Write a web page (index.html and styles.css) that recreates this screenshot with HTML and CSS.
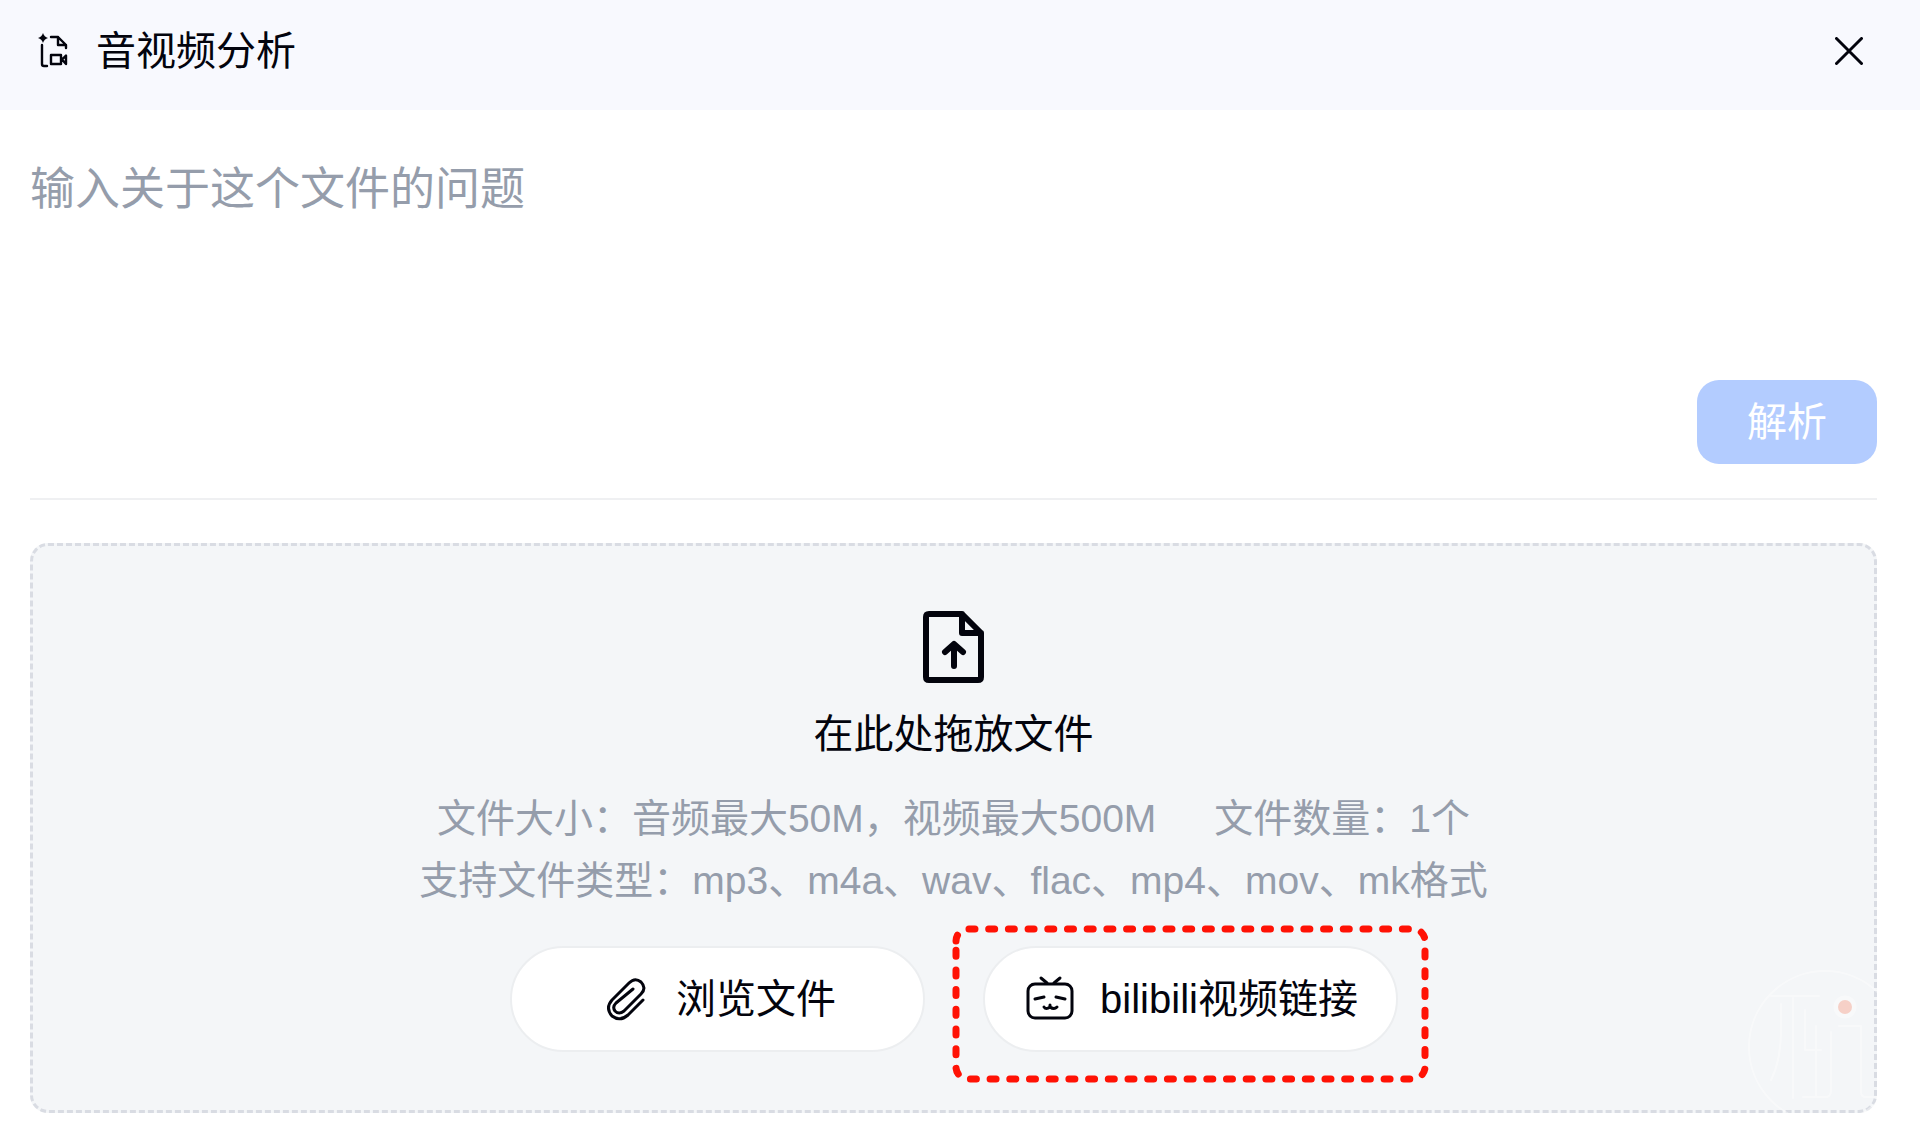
FILE: index.html
```html
<!DOCTYPE html>
<html lang="zh-CN">
<head>
<meta charset="utf-8">
<meta name="viewport" content="width=device-width, initial-scale=1">
<title>音视频分析</title>
<link rel="stylesheet" href="styles.css">
</head>
<body>
<header class="header">
  <svg class="header-icon" viewBox="0 0 30 36" aria-hidden="true">
    <path class="fill" d="M5 0 Q6.200 3.800 10 5 Q6.200 6.200 5 10 Q3.800 6.200 0 5 Q3.800 3.800 5 0Z"/>
    <path stroke-width="2.400" d="M4 12V31Q4 33 6 33H9M13 4H20L28 12V15M20 4V12H28M13 22H23V31H13ZM24 26.500L28 22.500V31Z"/>
  </svg>
  <h1 class="title">音视频分析</h1>
  <button class="close" type="button" aria-label="关闭">
    <svg viewBox="0 0 28 28" aria-hidden="true"><path d="M1.500 1.500L26.500 26.500M26.500 1.500L1.500 26.500"/></svg>
  </button>
</header>
<main class="content">
  <form class="ask">
    <textarea class="question" aria-label="问题" placeholder="输入关于这个文件的问题"></textarea>
    <button class="submit" type="button">解析</button>
  </form>
  <section class="dropzone">
    <svg class="upload-icon" viewBox="0 0 62 72" aria-hidden="true">
      <path d="M3 6Q3 3 6 3H39L58 22V66Q58 69 55 69H6Q3 69 3 66ZM39 3V22H58"/>
      <path d="M31 55V34M22 41L31 33L40 41"/>
    </svg>
    <h2 class="drop-title">在此处拖放文件</h2>
    <p class="hint"><span>文件大小：音频最大50M，视频最大500M</span><span>文件数量：1个</span></p>
    <p class="hint">支持文件类型：mp3、m4a、wav、flac、mp4、mov、mk格式</p>
    <div class="actions">
      <button class="pill" type="button">
        <svg class="pill-icon" viewBox="0 0 48 48" aria-hidden="true">
          <path d="M41 25L26 40Q18 47 10 41Q3 33 10 25L27 8Q33 2 39 7Q45 13 39 19L22 36Q17 40 13 36Q10 32 14 28L31 14"/>
        </svg>
        浏览文件
      </button>
      <div class="highlight">
        <button class="pill" type="button">
          <svg class="pill-icon" viewBox="0 0 48 48" aria-hidden="true">
            <rect x="2" y="9" width="44" height="34" rx="7"/>
            <path d="M15 3L21 8M34 3L28 8M9 24L18 22M30 22L39 24M18 32Q20 35 24 32Q28 35 31 32M24 30V32"/>
          </svg>
          bilibili视频链接
        </button>
        <svg class="highlight-frame" viewBox="0 0 475 157" aria-hidden="true">
          <path d="M3 16A12 12 0 0 1 15 4H460A12 12 0 0 1 472 16V142A12 12 0 0 1 460 154H15A12 12 0 0 1 3 142Z"/>
        </svg>
      </div>
    </div>
  </section>
</main>
<svg class="watermark" viewBox="0 0 160 160" aria-hidden="true">
  <circle cx="78" cy="77" r="76"/>
  <path d="M24 26H72M34 34V60Q34 90 24 110M46 28V128M58 40V80H74M69 56V126M56 127H80Q84 126 84 120V62M92 56H114V122Q114 127 119 127H130Q134 126 134 120V104"/>
  <circle class="ring" cx="98" cy="37" r="9"/>
  <circle class="dot" cx="98" cy="37" r="7"/>
</svg>
</body>
</html>
```
FILE: styles.css
```css
* {
  box-sizing: border-box;
}

body {
  position: relative;
  margin: 0;
  background: #fff;
  color: #03040d;
  font-family: "Liberation Sans", "Noto Sans CJK SC", sans-serif;
  font-size: 40px;
  line-height: 60px;
}

button,
textarea {
  border: 0;
  padding: 0;
  color: inherit;
  font: inherit;
}

svg {
  fill: none;
  stroke: currentColor;
  stroke-linecap: round;
  stroke-linejoin: round;
}

.header {
  display: flex;
  align-items: center;
  height: 110px;
  padding: 0 57px 8px 38px;
  background: #f8f9fe;
}

.header-icon {
  width: 30px;
  height: 36px;
}

.header-icon .fill {
  fill: currentColor;
  stroke: none;
}

.title {
  flex: 1;
  margin: 0 0 0 28px;
  font-size: 40px;
  font-weight: 400;
}

.close {
  display: flex;
  background: none;
}

.close svg {
  width: 28px;
  height: 28px;
  stroke-width: 3;
}

.content {
  padding: 48px 43px 30px 30px;
}

.ask {
  display: flex;
  flex-direction: column;
  align-items: flex-end;
  padding-bottom: 34px;
  border-bottom: 2px solid #eff0f2;
}

.question {
  width: 100%;
  height: 222px;
  background: none;
  font-size: 45px;
  line-height: 64px;
  outline: 0;
  resize: none;
}

.question::placeholder {
  color: #959dab;
  opacity: 1;
}

.submit {
  width: 180px;
  height: 84px;
  border-radius: 22px;
  background: #b3ccff;
  color: #fff;
}

.dropzone {
  display: flex;
  flex-direction: column;
  align-items: center;
  margin-top: 43px;
  padding: 65px 40px 58px;
  border: 3px dashed #d9dce3;
  border-radius: 18px;
  background: #f4f6f8;
}

.upload-icon {
  width: 62px;
  height: 72px;
  stroke-width: 6;
}

.drop-title {
  margin: 21px 0 24px;
  font-size: 40px;
  font-weight: 400;
}

.hint {
  display: flex;
  gap: 58px;
  margin: 0;
  color: #959dab;
  font-size: 39px;
  line-height: 62px;
}

.actions {
  display: flex;
  gap: 58px;
  margin-top: 34px;
}

.pill {
  display: flex;
  align-items: center;
  justify-content: center;
  gap: 26px;
  width: 415px;
  height: 106px;
  padding-left: 4px;
  border: 2px solid #eceef0;
  border-radius: 53px;
  background: #fff;
}

.pill-icon {
  width: 48px;
  height: 48px;
  stroke-width: 3;
}

.highlight {
  position: relative;
}

.highlight-frame {
  position: absolute;
  top: -21px;
  left: -30px;
  width: 475px;
  height: 157px;
  overflow: visible;
  stroke: #ff1205;
  stroke-width: 7;
  stroke-dasharray: 6 13.7;
  pointer-events: none;
}

.watermark {
  position: absolute;
  right: 13px;
  bottom: 13px;
  width: 160px;
  height: 160px;
  stroke: #fff;
  stroke-width: 2;
  opacity: 0.4;
  pointer-events: none;
}

.watermark .ring {
  stroke-width: 5;
}

.watermark .dot {
  fill: #f99a80;
  stroke: none;
}
```
